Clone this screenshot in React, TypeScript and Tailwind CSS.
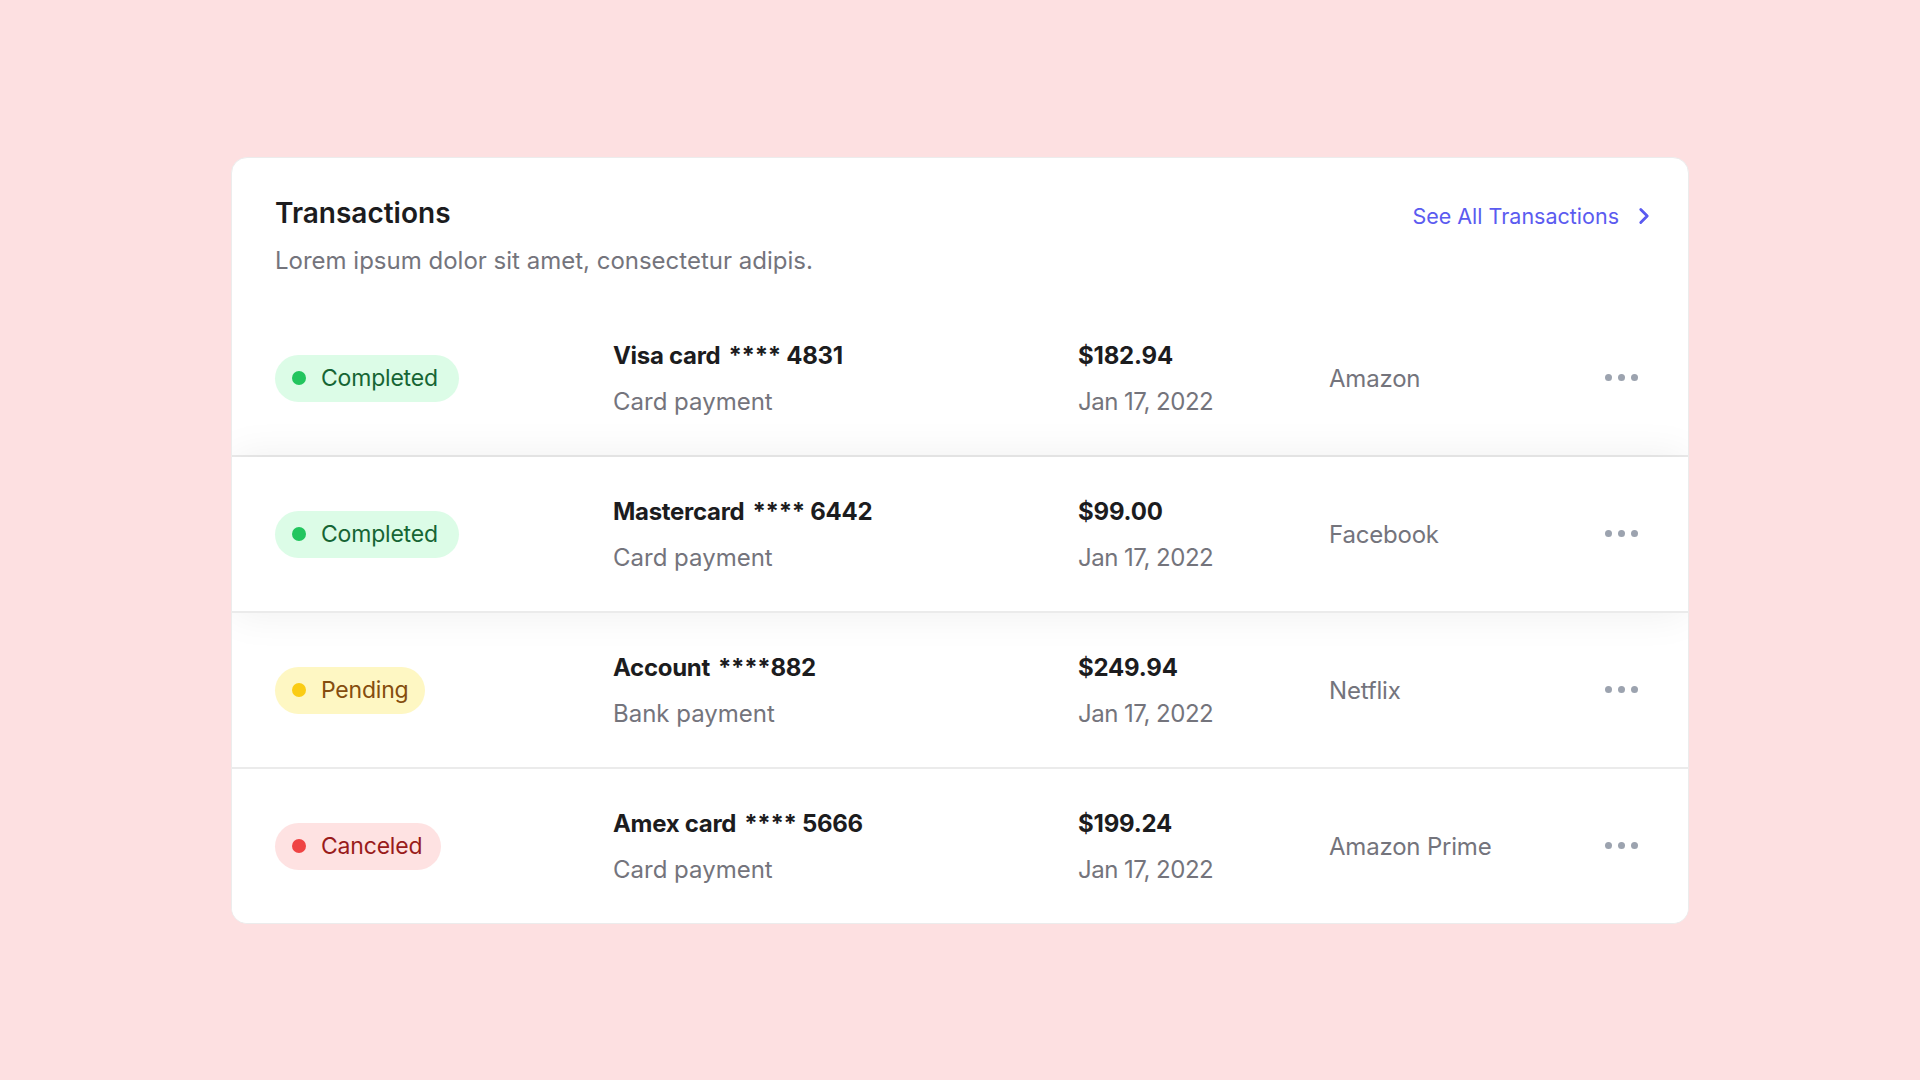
import React from "react";
import { ChevronRight } from "lucide-react";

type Status = "Completed" | "Pending" | "Canceled";

const rows: {
  status: Status;
  method: string;
  mask: string;
  kind: string;
  amount: string;
  date: string;
  merchant: string;
  raised?: boolean;
}[] = [
  { status: "Completed", method: "Visa card", mask: "**** 4831", kind: "Card payment", amount: "$182.94", date: "Jan 17, 2022", merchant: "Amazon" },
  { status: "Completed", method: "Mastercard", mask: "**** 6442", kind: "Card payment", amount: "$99.00", date: "Jan 17, 2022", merchant: "Facebook", raised: true },
  { status: "Pending", method: "Account", mask: "****882", kind: "Bank payment", amount: "$249.94", date: "Jan 17, 2022", merchant: "Netflix" },
  { status: "Canceled", method: "Amex card", mask: "**** 5666", kind: "Card payment", amount: "$199.24", date: "Jan 17, 2022", merchant: "Amazon Prime" },
];

function Badge({ status }: { status: Status }) {
  if (status === "Completed") {
    return (
      <span className="inline-flex h-[47px] items-center gap-[15px] rounded-full bg-[#dcfce7] pl-[17px] pr-[21px] text-[23px] tracking-[-0.2px] text-[#166534]">
        <span className="h-[14px] w-[14px] rounded-full bg-[#22c55e]" />
        Completed
      </span>
    );
  }
  if (status === "Pending") {
    return (
      <span className="inline-flex h-[47px] items-center gap-[15px] rounded-full bg-[#fef7c3] pl-[17px] pr-[16px] text-[23px] tracking-[-0.2px] text-[#854d0e]">
        <span className="h-[14px] w-[14px] rounded-full bg-[#facc15]" />
        Pending
      </span>
    );
  }
  return (
    <span className="inline-flex h-[47px] items-center gap-[15px] rounded-full bg-[#fee2e2] pl-[17px] pr-[19px] text-[23px] tracking-[-0.2px] text-[#991b1b]">
      <span className="h-[14px] w-[14px] rounded-full bg-[#ef4444]" />
      Canceled
    </span>
  );
}

export default function App() {
  return (
    <div
      className="flex min-h-screen w-full items-center justify-center bg-[#fde0e1]"
      style={{ fontFamily: "Inter, 'Noto Sans', sans-serif" }}
    >
      <div className="w-[1458px] overflow-hidden rounded-2xl border border-[#ececec] bg-white">
        <div className="flex items-start justify-between pl-[43px] pr-[31px] pt-[37px] pb-[24px]">
          <div className="flex flex-col gap-[14px]">
            <h1 className="text-[28px] font-semibold leading-[36px] text-[#1c1c1e]">Transactions</h1>
            <p className="text-[24px] leading-[32px] text-[#74747c]">
              Lorem ipsum dolor sit amet, consectetur adipis.
            </p>
          </div>
          <a className="mt-[5px] flex items-center gap-3 text-[21.5px] leading-[32px] text-[#5b5bf0]">
            See All Transactions
            <ChevronRight size={26} strokeWidth={2.6} />
          </a>
        </div>
        <div className="flex flex-col">
          {rows.map((r, i) => (
            <div
              key={i}
              className={
                "grid grid-cols-[338px_465px_251px_1fr_auto] items-center bg-white pl-[43px] pr-[50px] " +
                (i < rows.length - 1 ? "h-[156px] border-b-2 border-[#ebebeb] " : "h-[154px] ") +
                (r.raised ? "relative z-10 shadow-[0_0_40px_rgba(0,0,0,0.07)]" : "")
              }
            >
              <div className="pt-[1px]">
                <Badge status={r.status} />
              </div>
              <div className="flex flex-col gap-[14px] pt-[3px] text-[24px] leading-[32px]">
                <span className="font-bold tracking-[-0.3px] text-[#1c1c1e]">
                  {r.method}
                  <span className="ml-[8px]">{r.mask}</span>
                </span>
                <span className="text-[#74747c]">{r.kind}</span>
              </div>
              <div className="flex flex-col gap-[14px] pt-[3px] text-[24px] leading-[32px]">
                <span className="font-bold tracking-[-0.2px] text-[#1c1c1e]">{r.amount}</span>
                <span className="tracking-[-0.5px] text-[#74747c]">{r.date}</span>
              </div>
              <div className="pt-[3px] text-[24px] leading-[32px] tracking-[-0.2px] text-[#74747c]">{r.merchant}</div>
              <div className="flex items-center gap-[6px]">
                <span className="h-[7px] w-[7px] rounded-full bg-[#9ca3af]" />
                <span className="h-[7px] w-[7px] rounded-full bg-[#9ca3af]" />
                <span className="h-[7px] w-[7px] rounded-full bg-[#9ca3af]" />
              </div>
            </div>
          ))}
        </div>
      </div>
    </div>
  );
}
